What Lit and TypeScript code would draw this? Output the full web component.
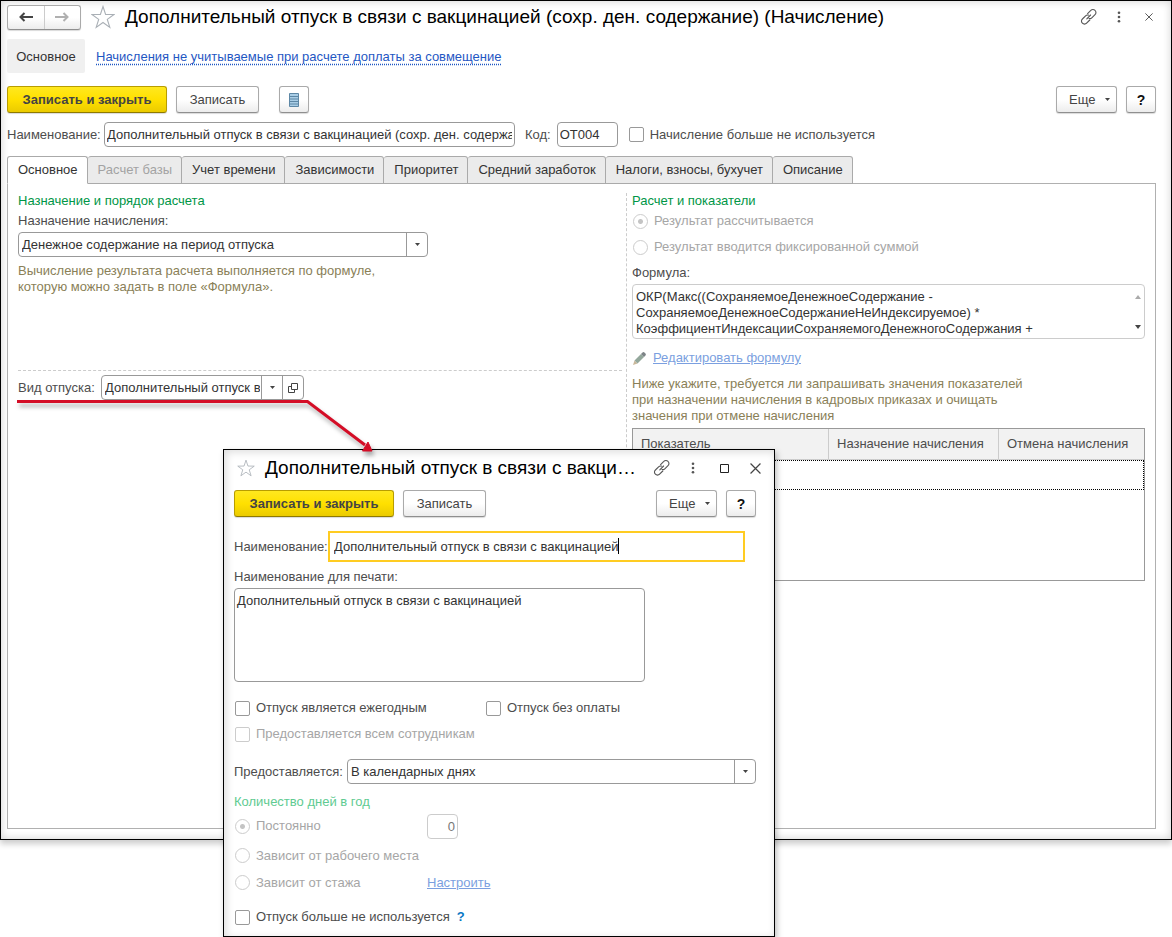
import { LitElement, html, svg, css } from "lit";
import { customElement, property } from "lit/decorators.js";
import { classMap } from "lit/directives/class-map.js";

const shared = css`
  * {
    box-sizing: border-box;
  }
  button,
  input,
  select,
  textarea {
    font: inherit;
    color: #333;
    margin: 0;
    border-radius: 0;
    outline: none;
  }
  .btn {
    height: 27px;
    padding: 0 13px;
    border: 1px solid #aaa;
    border-bottom-color: #8f8f8f;
    border-radius: 3px;
    background: linear-gradient(#fff 50%, #ececec);
    box-shadow: 0 1px 1px #00000026;
    color: #444;
    white-space: nowrap;
    display: flex;
    align-items: center;
    justify-content: center;
  }
  .btn.primary {
    width: 160px;
    padding: 0;
    background: linear-gradient(#ffe81f, #ffe000 50%, #ebcb00);
    border-color: #b89d00;
    border-bottom-color: #8f7a00;
    font-weight: bold;
  }
  .btn.save {
    width: 83px;
    padding: 0;
  }
  .btn.square {
    width: 30px;
    padding: 0;
  }
  .btn.help {
    font-weight: bold;
    font-size: 14px;
    color: #111;
  }
  .btn.more {
    width: 61px;
    padding: 0 6px 0 12px;
    justify-content: space-between;
  }
  .toolbar {
    display: flex;
    gap: 9px;
  }
  .grow {
    flex: 1;
  }
  .iconbtn {
    border: 0;
    padding: 0;
    background: none;
    display: flex;
    align-items: center;
    justify-content: center;
    width: 20px;
    height: 20px;
  }
  .field {
    height: 25px;
    border: 1px solid #999;
    border-radius: 4px;
    padding: 0 2px;
    background: #fff;
    min-width: 0;
  }
  .area {
    display: block;
    resize: none;
    border: 1px solid #999;
    border-radius: 4px;
    background: #fff;
    padding: 4px 3px;
    line-height: 16px;
    overflow: hidden;
  }
  .row {
    display: flex;
    align-items: center;
  }
  .check {
    display: flex;
    align-items: center;
    gap: 6px;
    height: 16px;
    white-space: nowrap;
  }
  .check input {
    appearance: none;
    width: 15px;
    height: 15px;
    border: 1px solid #999;
    border-radius: 2px;
    background: #fff;
    flex: none;
  }
  .check input[type="radio"] {
    border-radius: 50%;
  }
  .check.off {
    color: #a6a6a6;
  }
  .check.off input {
    border-color: #ccc;
  }
  .check input[type="radio"]:checked {
    background: radial-gradient(circle, #c4c4c4 2px, #fff 3px);
  }
  h2 {
    margin: 0;
    font-size: 13px;
    line-height: 16px;
    font-weight: normal;
    color: #009646;
  }
  a {
    color: #1f57c3;
  }
  a.off {
    color: #7b9fe0;
  }
`;

const linkIcon = svg`<svg width="18" height="18" viewBox="0 0 18 18" fill="none" stroke="#555" stroke-width="1.1" stroke-linecap="round">
  <path d="M7.600 5.600 10.800 2.400a2.800 2.800 0 0 1 4.200 0 2.800 2.800 0 0 1 0 4.200L11.800 9.800a2.800 2.800 0 0 1-2.800.7"/>
  <path d="M9.800 12 6.600 15.200a2.800 2.800 0 0 1-4.200 0 2.800 2.800 0 0 1 0-4.200L5.600 7.800a2.800 2.800 0 0 1 2.800-.7"/>
  <path d="M6.800 10.800l3.800-3.800"/>
</svg>`;
const dotsIcon = svg`<svg width="4" height="12" viewBox="0 0 4 12" fill="#555"><circle cx="2" cy="1.7" r="1.3"/><circle cx="2" cy="6" r="1.3"/><circle cx="2" cy="10.3" r="1.3"/></svg>`;
const cross = (size: number) =>
  svg`<svg width=${size} height=${size} viewBox="0 0 10 10" stroke="#444" stroke-width="1.1"><path d="M.5.5l9 9M9.5.5l-9 9"/></svg>`;
const star = (size: number) =>
  svg`<svg width=${size} height=${size} viewBox="0 0 24 24" fill="#fff" stroke="#aab0b6" stroke-width="1.1"><path d="M12 1.5l2.6 7.9 8.4.1-6.7 4.9 2.5 8-6.8-4.9-6.8 4.9 2.5-8L1 9.500l8.400-.1z"/></svg>`;
const caretIcon = svg`<svg width="5" height="3" viewBox="0 0 5 3" fill="#444"><path d="M0 0h5L2.500 3z"/></svg>`;

@customElement("combo-box")
class ComboBox extends LitElement {
  @property() value = "";
  @property() label = "";
  @property({ type: Boolean }) open = false;

  static styles = [
    shared,
    css`
      :host {
        display: block;
        min-width: 0;
      }
      .box {
        display: flex;
        height: 25px;
        border: 1px solid #999;
        border-radius: 4px;
        background: #fff;
        overflow: hidden;
      }
      .pick {
        flex: 1;
        min-width: 0;
        display: grid;
        grid-template-columns: minmax(0, 1fr) 21px;
      }
      select {
        appearance: none;
        border: 0;
        background: none;
        padding: 0 22px 0 3px;
        grid-area: 1 / 1 / 2 / 3;
        width: 100%;
        height: 23px;
      }
      .arrow,
      .ext {
        border: 0;
        border-left: 1px solid #999;
        display: flex;
        align-items: center;
        justify-content: center;
        pointer-events: none;
      }
      .arrow {
        grid-area: 1 / 2;
      }
      .ext {
        width: 21px;
        padding: 0;
        background: none;
      }
    `,
  ];

  render() {
    return html`<div class="box">
      <div class="pick">
        <select aria-label=${this.label}>
          <option>${this.value}</option>
        </select>
        <span class="arrow">${caretIcon}</span>
      </div>
      ${this.open
        ? html`<button class="ext" aria-label="Открыть">
            <svg width="10" height="10" viewBox="0 0 10 10" fill="none" stroke="#444">
              <path d="M3.500.5h6v6h-6zM3.500 3.500h-3v6h6v-3" />
            </svg>
          </button>`
        : ""}
    </div>`;
  }
}

@customElement("leave-dialog")
class LeaveDialog extends LitElement {
  static styles = [
    shared,
    css`
      :host {
        display: block;
        background: #fff;
        border: 1px solid #000;
        box-shadow: 2px 3px 6px #00000040, inset 2px 2px 8px #00000024;
        padding: 7px 18px 11px 10px;
      }
      .head {
        display: flex;
        align-items: center;
        height: 22px;
      }
      .fav {
        width: 24px;
      }
      h1 {
        margin: 0 0 0 7px;
        font-size: 19px;
        line-height: 22px;
        font-weight: normal;
        color: #000;
        white-space: nowrap;
      }
      .tools {
        margin: 0 -9px 0 auto;
        display: flex;
        gap: 11px;
      }
      .toolbar {
        margin-top: 11px;
      }
      .name {
        margin: 14px 11px 0 0;
        justify-content: space-between;
      }
      .edit {
        position: relative;
        width: 417px;
      }
      .edit input {
        width: 100%;
        height: 31px;
        border: 2px solid #fc2;
        padding: 0 4px;
        display: block;
      }
      .cursor {
        position: absolute;
        left: 290px;
        top: 7px;
        width: 1px;
        height: 16px;
        background: #000;
      }
      .caption {
        display: block;
        margin: 7px 0 3px;
        line-height: 16px;
      }
      .area {
        width: 411px;
        height: 94px;
        padding: 4px 2px;
      }
      .grid {
        margin-top: 18px;
        display: grid;
        grid-template-columns: 251px 1fr;
        row-gap: 10px;
        padding-left: 1px;
      }
      .unit {
        margin-top: 17px;
        justify-content: space-between;
      }
      .unit combo-box {
        width: 409px;
      }
      h2 {
        margin-top: 10px;
        color: #5fcb92;
      }
      .radios {
        display: grid;
        grid-template-columns: 192px 1fr;
        grid-template-rows: 32px 27px 27px;
        align-items: center;
        padding-left: 1px;
      }
      .num {
        width: 31px;
        text-align: right;
        border-color: #ccc;
        color: #777;
      }
      .last {
        display: flex;
        gap: 7px;
        margin-top: 13px;
        padding-left: 1px;
      }
      .tip {
        border: 0;
        background: none;
        padding: 0;
        color: #0b78c4;
        font-weight: bold;
      }
    `,
  ];

  render() {
    return html`
      <div class="head">
        <button class="iconbtn fav" aria-label="Избранное">${star(18)}</button>
        <h1>Дополнительный отпуск в связи с вакци…</h1>
        <div class="tools">
          <button class="iconbtn" aria-label="Ссылка">${linkIcon}</button>
          <button class="iconbtn" aria-label="Меню">${dotsIcon}</button>
          <button class="iconbtn" aria-label="Развернуть">
            <svg width="9" height="9" viewBox="0 0 9 9" fill="none" stroke="#222"><path d="M.5.5h8v8h-8z" /></svg>
          </button>
          <button class="iconbtn" aria-label="Закрыть">${cross(11)}</button>
        </div>
      </div>
      <div class="toolbar">
        <button class="btn primary">Записать и закрыть</button>
        <button class="btn save">Записать</button>
        <span class="grow"></span>
        <button class="btn more">Еще ${caretIcon}</button>
        <button class="btn square help">?</button>
      </div>
      <div class="row name">
        <label for="name">Наименование:</label>
        <div class="edit">
          <input id="name" .value=${"Дополнительный отпуск в связи с вакцинацией"} />
          <span class="cursor"></span>
        </div>
      </div>
      <label class="caption" for="print">Наименование для печати:</label>
      <textarea class="area" id="print" .value=${"Дополнительный отпуск в связи с вакцинацией"}></textarea>
      <div class="grid">
        <label class="check"><input type="checkbox" />Отпуск является ежегодным</label>
        <label class="check"><input type="checkbox" />Отпуск без оплаты</label>
        <label class="check off"><input type="checkbox" disabled />Предоставляется всем сотрудникам</label>
      </div>
      <div class="row unit">
        <span>Предоставляется:</span>
        <combo-box label="Предоставляется" value="В календарных днях"></combo-box>
      </div>
      <h2>Количество дней в год</h2>
      <div class="radios">
        <label class="check off"><input type="radio" name="days" checked disabled />Постоянно</label>
        <input class="field num" aria-label="Количество дней" value="0" disabled />
        <label class="check off"><input type="radio" name="days" disabled />Зависит от рабочего места</label>
        <span></span>
        <label class="check off"><input type="radio" name="days" disabled />Зависит от стажа</label>
        <a class="off" href="#">Настроить</a>
      </div>
      <div class="last">
        <label class="check"><input type="checkbox" />Отпуск больше не используется</label>
        <button class="tip">?</button>
      </div>
    `;
  }
}

@customElement("app-root")
class AppRoot extends LitElement {
  private tabs = [
    "Основное",
    "Расчет базы",
    "Учет времени",
    "Зависимости",
    "Приоритет",
    "Средний заработок",
    "Налоги, взносы, бухучет",
    "Описание",
  ];

  static styles = [
    shared,
    css`
      :host {
        display: block;
        position: relative;
        min-height: 100vh;
        font: 13px/16px "Liberation Sans", Arial, sans-serif;
        color: #4d4d4d;
        background: #fff;
      }
      .window {
        border: 1px solid #000;
        padding: 3px 15px 10px 6px;
        box-shadow: 0 4px 6px #00000033, inset 0 0 8px #00000030;
      }
      .head {
        display: flex;
        align-items: center;
        height: 26px;
      }
      .nav {
        display: flex;
        width: 74px;
        height: 25px;
        border: 1px solid #aaa;
        border-bottom-color: #8f8f8f;
        border-radius: 3px;
        background: linear-gradient(#fff 50%, #ececec);
        box-shadow: 0 1px 1px #00000026;
        margin-right: 10px;
      }
      .nav button {
        flex: 1;
        border: 0;
        padding: 0;
        background: none;
        display: flex;
        align-items: center;
        justify-content: center;
      }
      .nav button + button {
        border-left: 1px solid #ccc;
      }
      .head .fav {
        width: 24px;
      }
      h1 {
        margin: 0 0 0 10px;
        font-size: 19px;
        line-height: 22px;
        font-weight: normal;
        color: #000;
        white-space: nowrap;
      }
      .tools {
        margin: 0 -3px 0 auto;
        display: flex;
        gap: 10px;
      }
      .sections {
        display: flex;
        align-items: center;
        gap: 11px;
        margin-top: 9px;
        line-height: 36px;
      }
      .sections .cur {
        width: 78px;
        height: 34px;
        text-align: center;
        background: #f0f0f0;
        border-radius: 2px;
        color: #333;
      }
      .sections a {
        height: 34px;
        text-decoration: underline dotted;
        text-underline-offset: 3px;
      }
      .toolbar {
        margin-top: 13px;
      }
      .list {
        margin-left: 11px;
      }
      .title {
        margin-top: 9px;
      }
      .title label:first-child {
        width: 97px;
      }
      .title .long {
        width: 411px;
      }
      .title .code {
        width: 61px;
        margin: 0 11px 0 6px;
      }
      .title .codelabel {
        margin-left: 10px;
      }
      .tabs {
        display: flex;
        margin-top: 9px;
      }
      .tab {
        height: 28px;
        padding: 0 9px 0 10px;
        border: 1px solid #aaa;
        border-left-width: 0;
        border-radius: 3px 3px 0 0;
        background: #ebebeb;
        white-space: nowrap;
      }
      .tab.on {
        border-left-width: 1px;
        border-bottom-color: #fff;
        background: #fff;
      }
      .tab.off {
        color: #a3a3a3;
      }
      .pane {
        margin-top: -1px;
        border: 1px solid #b0b0b0;
        min-height: 646px;
        padding: 9px 10px 0;
        display: grid;
        grid-template-columns: minmax(0, 608fr) minmax(0, 519fr);
        align-items: start;
      }
      .tab.on {
        position: relative;
        z-index: 1;
      }
      .left {
        padding-right: 4px;
      }
      .right {
        border-left: 1px dashed #ccc;
        padding-left: 5px;
        min-height: 400px;
      }
      .line {
        display: block;
        margin-top: 4px;
        line-height: 16px;
      }
      .left > combo-box {
        width: 410px;
        margin-top: 3px;
      }
      .hint {
        margin: 6px 0 0;
        color: #8a7f58;
        line-height: 16px;
      }
      .kind {
        border-top: 1px dashed #ccc;
        margin-top: 75px;
        padding-top: 4px;
      }
      .kind > span {
        width: 83px;
      }
      .kind combo-box {
        width: 203px;
      }
      .right .check {
        margin-left: 1px;
      }
      .right .gap4 {
        margin-top: 4px;
      }
      .right .gap10 {
        margin-top: 10px;
      }
      .formula {
        position: relative;
        margin-top: 3px;
      }
      .formula textarea {
        width: 100%;
        height: 55px;
        border-color: #ccc;
      }
      .scroll {
        position: absolute;
        right: 4px;
        top: 11px;
        bottom: 10px;
        display: flex;
        flex-direction: column;
        justify-content: space-between;
      }
      .edit {
        margin-top: 11px;
        gap: 6px;
      }
      .ask {
        margin-top: 10px;
      }
      table {
        width: 100%;
        height: 153px;
        margin-top: 4px;
        border: 1px solid #999;
        border-spacing: 0;
        table-layout: fixed;
      }
      th {
        height: 31px;
        padding: 0 8px;
        font-weight: normal;
        text-align: left;
        background: #f2f2f2;
        border-bottom: 1px solid #ccc;
        white-space: nowrap;
      }
      th + th {
        border-left: 1px solid #ccc;
      }
      .c1 {
        width: 195px;
      }
      .c2 {
        width: 170px;
      }
      .sel td {
        height: 30px;
        padding: 0;
        border: 1px dotted #000;
      }
      .dialog {
        position: absolute;
        left: 223px;
        top: 449px;
        width: 552px;
      }
      .pointer {
        position: absolute;
        left: 10px;
        top: 394px;
        pointer-events: none;
        filter: drop-shadow(2px 4px 2px #00000050);
      }
    `,
  ];

  render() {
    return html`
      <main class="window">
        <div class="head">
          <div class="nav">
            <button aria-label="Назад">
              <svg width="14" height="10" viewBox="0 0 14 10" fill="none" stroke="#444" stroke-width="2"><path d="M14 5H2M5.500 1 1.500 5l4 4" /></svg>
            </button>
            <button aria-label="Вперед">
              <svg width="14" height="10" viewBox="0 0 14 10" fill="none" stroke="#b0b0b0" stroke-width="2"><path d="M0 5h12M8.500 1l4 4-4 4" /></svg>
            </button>
          </div>
          <button class="iconbtn fav" aria-label="Избранное">${star(24)}</button>
          <h1>Дополнительный отпуск в связи с вакцинацией (сохр. ден. содержание) (Начисление)</h1>
          <div class="tools">
            <button class="iconbtn" aria-label="Ссылка">${linkIcon}</button>
            <button class="iconbtn" aria-label="Меню">${dotsIcon}</button>
            <button class="iconbtn" aria-label="Закрыть">${cross(8)}</button>
          </div>
        </div>
        <nav class="sections">
          <span class="cur">Основное</span>
          <a href="#">Начисления не учитываемые при расчете доплаты за совмещение</a>
        </nav>
        <div class="toolbar">
          <button class="btn primary">Записать и закрыть</button>
          <button class="btn save">Записать</button>
          <button class="btn square list" aria-label="Список">
            <svg width="10" height="14" viewBox="0 0 10 14"><path fill="#a9cde6" stroke="#5d87a5" d="M.5.5h9v13h-9z" /><path stroke="#5d87a5" d="M1 3.500h8M1 6h8M1 8.500h8M1 11h8" /></svg>
          </button>
          <span class="grow"></span>
          <button class="btn more">Еще ${caretIcon}</button>
          <button class="btn square help">?</button>
        </div>
        <div class="row title">
          <label for="title">Наименование:</label>
          <input class="field long" id="title" .value=${"Дополнительный отпуск в связи с вакцинацией (сохр. ден. содержание)"} />
          <label class="codelabel" for="code">Код:</label>
          <input class="field code" id="code" value="ОТ004" />
          <label class="check"><input type="checkbox" />Начисление больше не используется</label>
        </div>
        <div class="tabs" role="tablist">
          ${this.tabs.map(
            (t, i) =>
              html`<button role="tab" class=${classMap({ tab: true, on: i === 0, off: i === 1 })}>${t}</button>`,
          )}
        </div>
        <section class="pane">
          <div class="left">
            <h2>Назначение и порядок расчета</h2>
            <span class="line">Назначение начисления:</span>
            <combo-box label="Назначение начисления" value="Денежное содержание на период отпуска"></combo-box>
            <p class="hint">Вычисление результата расчета выполняется по формуле,<br />которую можно задать в поле «Формула».</p>
            <div class="row kind">
              <span>Вид отпуска:</span>
              <combo-box label="Вид отпуска" value="Дополнительный отпуск в связи с вакцинацией" open></combo-box>
            </div>
          </div>
          <div class="right">
            <h2>Расчет и показатели</h2>
            <label class="check off gap4"><input type="radio" name="mode" checked disabled />Результат рассчитывается</label>
            <label class="check off gap10"><input type="radio" name="mode" disabled />Результат вводится фиксированной суммой</label>
            <label class="line gap10" for="formula">Формула:</label>
            <div class="formula">
              <textarea class="area" id="formula" readonly .value=${"ОКР(Макс((СохраняемоеДенежноеСодержание -\nСохраняемоеДенежноеСодержаниеНеИндексируемое) *\nКоэффициентИндексацииСохраняемогоДенежногоСодержания +"}></textarea>
              <span class="scroll">
                <svg width="6" height="4" viewBox="0 0 6 4" fill="#aaa"><path d="M0 4h6L3 0z" /></svg>
                <svg width="6" height="4" viewBox="0 0 6 4" fill="#444"><path d="M0 0h6L3 4z" /></svg>
              </span>
            </div>
            <div class="row edit">
              <svg width="15" height="15" viewBox="0 0 15 15">
                <path fill="#c9b79a" d="M1 14l1.500-4.500 3 3z" />
                <path fill="#93a79b" d="M2.500 9.500l6.500-6.500 3 3-6.500 6.500z" />
                <path fill="#7d8487" d="M9 3l1.500-1.500q1-1 2.200.2l.6.600q1.200 1.200.2 2.200L12 6z" />
              </svg>
              <a class="off" href="#">Редактировать формулу</a>
            </div>
            <p class="hint ask">Ниже укажите, требуется ли запрашивать значения показателей<br />при назначении начисления в кадровых приказах и очищать<br />значения при отмене начисления</p>
            <table>
              <thead>
                <tr>
                  <th class="c1">Показатель</th>
                  <th class="c2">Назначение начисления</th>
                  <th>Отмена начисления</th>
                </tr>
              </thead>
              <tbody>
                <tr class="sel"><td colspan="3"></td></tr>
                <tr><td colspan="3"></td></tr>
              </tbody>
            </table>
          </div>
        </section>
      </main>
      <leave-dialog class="dialog" role="dialog"></leave-dialog>
      <svg class="pointer" width="370" height="64" viewBox="0 0 370 64">
        <path d="M7 7.500H297.500L355 51" fill="none" stroke="#d40d26" stroke-width="3" />
        <path d="M362 57h-9.500l5.500-9z" fill="#d40d26" stroke="#d40d26" stroke-linejoin="round" />
      </svg>
    `;
  }
}
